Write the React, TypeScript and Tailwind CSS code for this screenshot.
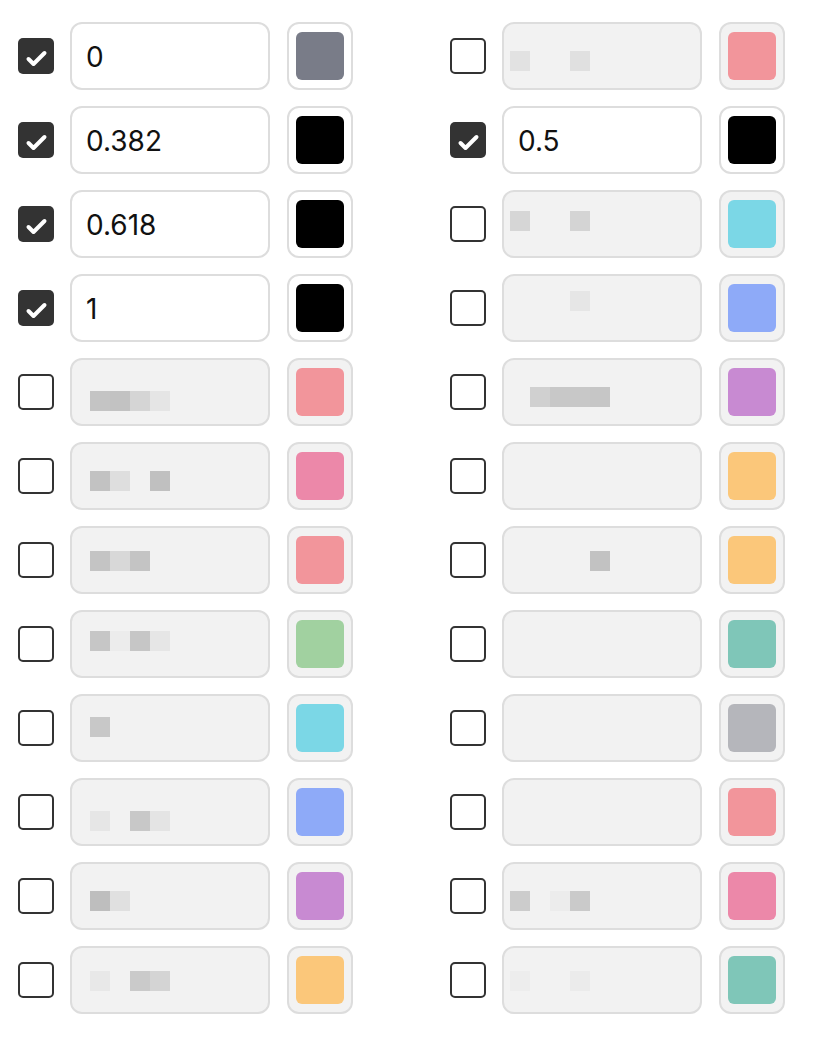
type Cell = string | null;

type Level = {
  checked: boolean;
  value?: string;
  color: string;
  blur?: { top: number; cells: Cell[] };
};

const left: Level[] = [
  { checked: true, value: '0', color: '#797c88' },
  { checked: true, value: '0.382', color: '#000000' },
  { checked: true, value: '0.618', color: '#000000' },
  { checked: true, value: '1', color: '#000000' },
  { checked: false, color: '#f2959b', blur: { top: 33, cells: ['#c4c4c4', '#c2c2c2', '#d5d5d5', '#e5e5e5'] } },
  { checked: false, color: '#ec88a9', blur: { top: 29, cells: ['#c2c2c2', '#dedede', null, '#c0c0c0'] } },
  { checked: false, color: '#f2959b', blur: { top: 25, cells: ['#c4c4c4', '#d8d8d8', '#c4c4c4'] } },
  { checked: false, color: '#a1d1a0', blur: { top: 21, cells: ['#c6c6c6', '#ececec', '#c6c6c6', '#e6e6e6'] } },
  { checked: false, color: '#7bd7e6', blur: { top: 23, cells: ['#c8c8c8'] } },
  { checked: false, color: '#8eaaf8', blur: { top: 33, cells: ['#e6e6e6', null, '#c8c8c8', '#e4e4e4'] } },
  { checked: false, color: '#c88ad2', blur: { top: 29, cells: ['#bebebe', '#e0e0e0'] } },
  { checked: false, color: '#fbc77a', blur: { top: 25, cells: ['#e8e8e8', null, '#cacaca', '#d4d4d4'] } },
];

const right: Level[] = [
  { checked: false, color: '#f2959b', blur: { top: 29, cells: ['#e2e2e2', null, null, '#e0e0e0'] } },
  { checked: true, value: '0.5', color: '#000000' },
  { checked: false, color: '#7bd7e6', blur: { top: 21, cells: ['#d6d6d6', null, null, '#d4d4d4'] } },
  { checked: false, color: '#8eaaf8', blur: { top: 17, cells: [null, null, null, '#e6e6e6'] } },
  { checked: false, color: '#c88ad2', blur: { top: 29, cells: [null, '#d0d0d0', '#c8c8c8', '#c8c8c8', '#c6c6c6'] } },
  { checked: false, color: '#fbc77a' },
  { checked: false, color: '#fbc77a', blur: { top: 25, cells: [null, null, null, null, '#c2c2c2'] } },
  { checked: false, color: '#7fc6b8' },
  { checked: false, color: '#b5b6bb' },
  { checked: false, color: '#f2959b' },
  { checked: false, color: '#ec88a9', blur: { top: 29, cells: ['#cccccc', null, '#ececec', '#cacaca'] } },
  { checked: false, color: '#7fc6b8', blur: { top: 25, cells: ['#ededed', null, null, '#ebebeb'] } },
];

function Checkbox({ checked }: { checked: boolean }) {
  if (checked) {
    return (
      <div className="flex h-9 w-9 shrink-0 items-center justify-center rounded-[5px] bg-[#333333]">
        <svg width="36" height="36" viewBox="0 0 36 36" fill="none">
          <path d="M10.5 21 L15.5 26 L26.5 15" stroke="#ffffff" strokeWidth="4" strokeLinecap="round" strokeLinejoin="round" />
        </svg>
      </div>
    );
  }
  return <div className="h-9 w-9 shrink-0 rounded-[5px] border-2 border-[#333333] bg-white" />;
}

function LevelRow({ level, inset }: { level: Level; inset: number }) {
  const off = !level.checked;
  return (
    <div className="flex h-[68px] items-center">
      <Checkbox checked={level.checked} />
      <div
        className={`ml-4 flex h-[68px] w-[200px] rounded-[12px] border-2 border-[#dddddd] ${
          off ? 'bg-[#f2f2f2]' : 'bg-white items-center pl-[14px] pt-[2px]'
        }`}
      >
        {level.value && (
          <span className="font-['Inter',sans-serif] text-[28px] text-[#111111]">{level.value}</span>
        )}
        {level.blur && (
          <div className="flex" style={{ paddingTop: level.blur.top - 2, paddingLeft: inset - 2 }}>
            {level.blur.cells.map((c, i) => (
              <div key={i} className="h-5 w-5" style={{ background: c ?? 'transparent' }} />
            ))}
          </div>
        )}
      </div>
      <div
        className={`ml-[17px] flex h-[68px] w-[66px] items-center justify-center rounded-[12px] border-2 border-[#dddddd] ${
          off ? 'bg-[#f2f2f2]' : 'bg-white'
        }`}
      >
        <div className="h-12 w-12 rounded-[6px]" style={{ background: level.color }} />
      </div>
    </div>
  );
}

export default function App() {
  return (
    <div className="min-h-[1041px] w-[815px] bg-white pl-[18px] pt-[22px] font-['Liberation_Sans',Arial,sans-serif]">
      <div className="flex gap-[97px]">
        <div className="flex flex-col gap-4">
          {left.map((l, i) => (
            <LevelRow key={i} level={l} inset={20} />
          ))}
        </div>
        <div className="flex flex-col gap-4">
          {right.map((l, i) => (
            <LevelRow key={i} level={l} inset={8} />
          ))}
        </div>
      </div>
    </div>
  );
}
